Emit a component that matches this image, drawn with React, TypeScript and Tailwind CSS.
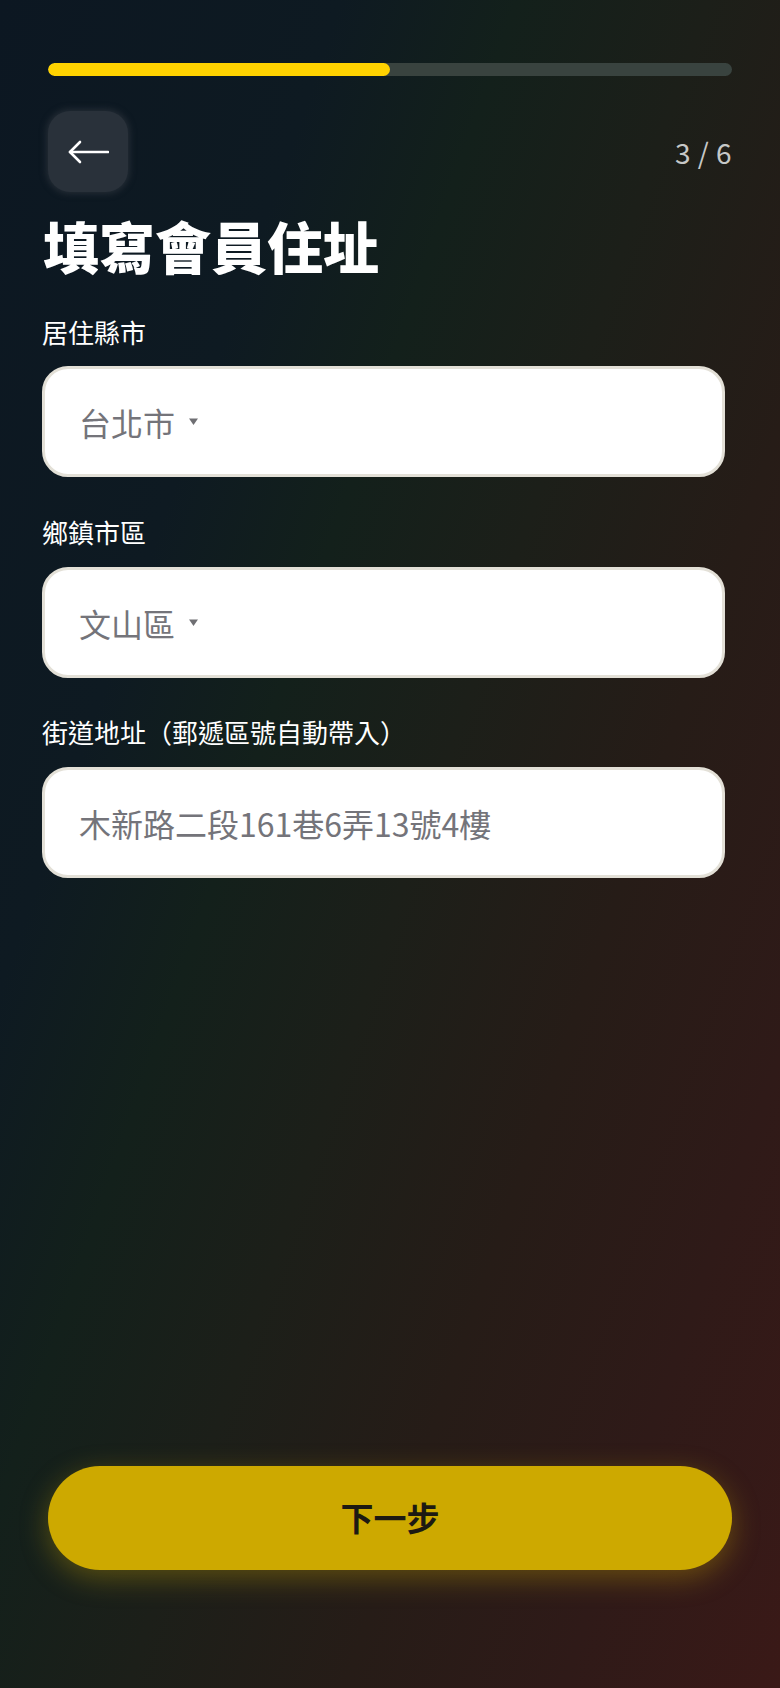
import { useState } from "react";

const cjk = "font-['Noto_Sans_CJK_TC','Noto_Sans',sans-serif]";

function BackArrow() {
  return (
    <svg width="42" height="24" viewBox="0 0 42 24" fill="none">
      <path d="M3 12H41" stroke="white" strokeWidth="2.6" strokeLinecap="round" />
      <path d="M13 2L3 12L13 22" stroke="white" strokeWidth="2.6" strokeLinecap="round" strokeLinejoin="round" />
    </svg>
  );
}

function Caret() {
  return (
    <svg width="11" height="9" viewBox="0 0 11 9" className="ml-[13px]">
      <path d="M1 1.5H10L5.5 8Z" fill="#6f6f73" />
    </svg>
  );
}

function SelectBox({ value }: { value: string }) {
  return (
    <button className="flex h-[111px] w-full items-center rounded-[26px] border-[3px] border-[#e3e0d7] bg-white pl-[34px] text-left">
      <span className="text-[32px] leading-none text-[#74747a]">{value}</span>
      <Caret />
    </button>
  );
}

export default function App() {
  const [address, setAddress] = useState("木新路二段161巷6弄13號4樓");

  return (
    <div
      className={`flex min-h-screen w-full flex-col bg-[linear-gradient(109deg,#0c1722_0%,#0e1a22_25%,#13201b_38%,#1c1f19_52%,#261c17_68%,#2f1a18_84%,#3a1917_100%)] ${cjk}`}
    >
      {/* Header */}
      <div className="px-[48px] pt-[63px]">
        <div className="h-[13px] w-full overflow-hidden rounded-full bg-[#39433f]">
          <div className="h-full w-1/2 rounded-full bg-[#ffd200]" />
        </div>
        <div className="mt-[35px] flex items-center justify-between">
          <button className="flex h-[81px] w-[80px] items-center justify-center rounded-[22px] bg-[#29313a] shadow-[0_0_6px_2px_rgba(41,49,58,0.8)]">
            <BackArrow />
          </button>
          <span className="text-[28px] leading-none tracking-[0.5px] text-[#c6c8c7]">3 / 6</span>
        </div>
      </div>

      {/* Form */}
      <div className="pl-[42px] pr-[55px]">
        <h1 className="mt-[25px] ml-[1px] text-[56px] leading-none font-black text-white">填寫會員住址</h1>

        <label className="mt-[46px] block text-[26px] leading-none font-normal text-white">居住縣市</label>
        <div className="mt-[21px]">
          <SelectBox value="台北市" />
        </div>

        <label className="mt-[42px] block text-[26px] leading-none font-normal text-white">鄉鎮市區</label>
        <div className="mt-[22px]">
          <SelectBox value="文山區" />
        </div>

        <label className="mt-[41px] block text-[26px] leading-none font-normal text-white">
          街道地址（郵遞區號自動帶入）
        </label>
        <input
          value={address}
          onChange={(e) => setAddress(e.target.value)}
          className="mt-[22px] block h-[111px] w-full rounded-[26px] border-[3px] border-[#e3e0d7] bg-white pl-[34px] text-[32px] text-[#74747a] outline-none"
        />
      </div>

      <div className="flex-1" />

      {/* Next */}
      <div className="px-[48px] pb-[118px]">
        <button className="flex h-[104px] w-full items-center justify-center rounded-full bg-[#cda900] text-[33px] font-bold text-[#1d1a12] shadow-[0_8px_28px_rgba(205,169,0,0.35)]">
          下一步
        </button>
      </div>
    </div>
  );
}
